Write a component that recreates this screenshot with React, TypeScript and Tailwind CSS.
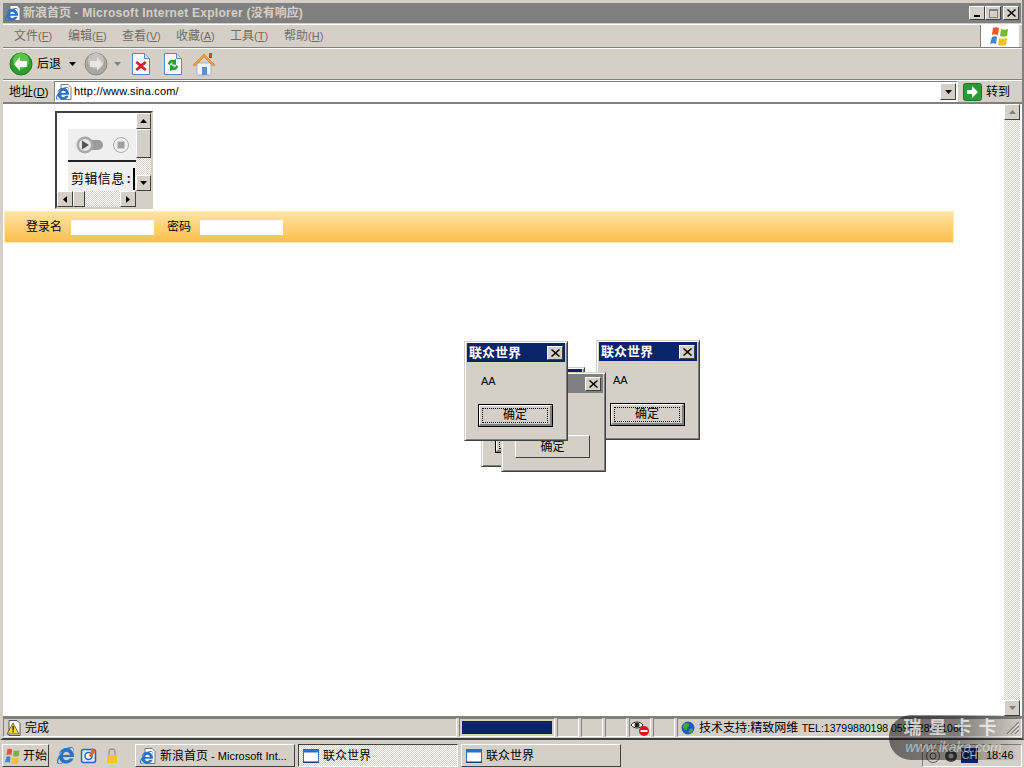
import React from 'react';
import { FaInternetExplorer } from 'react-icons/fa';

const raised = 'border border-t-white border-l-white border-r-[#404040] border-b-[#404040]';
const sunken = 'border border-t-[#808080] border-l-[#808080] border-r-white border-b-white';
const dither = 'bg-[repeating-conic-gradient(#d4d0c8_0_25%,#ffffff_0_50%)] bg-[length:2px_2px]';

const IeIcon = ({ size = 16 }: { size?: number }) => <FaInternetExplorer size={size} color="#2a72c8" />;

const IePage = ({ size = 16 }: { size?: number }) => (
  <span className="relative block shrink-0" style={{ width: size, height: size }}>
    <svg width={size} height={size} viewBox="0 0 16 16">
      <path d="M5 .5h7l3 3v12H5z" fill="#fff" stroke="#7a7a7a" />
    </svg>
    <span className="absolute bottom-0 left-0">
      <FaInternetExplorer size={size - 3} color="#2a72c8" />
    </span>
  </span>
);

const WinFlag = ({ size = 22 }: { size?: number }) => (
  <svg width={size} height={size} viewBox="0 0 22 22">
    <path d="M4 3c2-1 4-1 6 0l-1 7c-2-1-4-1-6 0z" fill="#e8562a" />
    <path d="M12 4c2 1 4 1 7 0l-1 7c-3 1-5 1-7 0z" fill="#7ab52e" />
    <path d="M3 12c2-1 4-1 5 0l-1 7c-2-1-4-1-6 0z" fill="#3f86d8" />
    <path d="M10 13c2 1 5 1 8 0l-1 7c-3 1-6 1-8 0z" fill="#f5bd26" />
  </svg>
);

const RoundArrow = ({ dir, gray }: { dir: 'left' | 'right'; gray?: boolean }) => (
  <svg width="24" height="24" viewBox="0 0 24 24" className="block">
    <circle cx="12" cy="12" r="11" fill={gray ? '#a8a6a0' : '#2e9e2a'} stroke={gray ? '#8e8c86' : '#1c7a1c'} />
    <circle cx="12" cy="9" r="8" fill={gray ? '#c4c2bc' : '#5cc24a'} />
    {dir === 'left' ? (
      <path d="M11 5l-6 7 6 7v-4h7V9h-7z" fill="#fff" />
    ) : (
      <path d="M13 5l6 7-6 7v-4H6V9h7z" fill="#e8e6e0" />
    )}
  </svg>
);

const Caret = ({ color = '#000' }: { color?: string }) => (
  <svg width="7" height="4" viewBox="0 0 7 4" className="block"><path d="M0 0h7L3.500 4z" fill={color} /></svg>
);

const StopIcon = () => (
  <svg width="20" height="24" viewBox="0 0 20 24" className="block">
    <path d="M1.500 1.500h12l5 5v16h-17z" fill="#f4f7fd" stroke="#5f86c4" />
    <path d="M13.500 1.500v5h5" fill="#cfdcf2" stroke="#5f86c4" />
    <path d="M6 9l4 3 4-3 1.500 2-3.500 3 3.500 3-1.500 2-4-3-4 3-1.500-2 3.500-3-3.500-3z" fill="#d8202a" />
  </svg>
);

const RefreshIcon = () => (
  <svg width="20" height="24" viewBox="0 0 20 24" className="block">
    <path d="M1.500 1.500h12l5 5v16h-17z" fill="#f4f7fd" stroke="#5f86c4" />
    <path d="M13.500 1.500v5h5" fill="#cfdcf2" stroke="#5f86c4" />
    <path d="M5 12c0-3 3-5 6-4l2-1v6l-5-1 2-1c-1-1-3 0-3 2z" fill="#27a32d" />
    <path d="M15 14c0 3-3 5-6 4l-2 1v-6l5 1-2 1c1 1 3 0 3-2z" fill="#27a32d" />
  </svg>
);

const HomeIcon = () => (
  <svg width="24" height="24" viewBox="0 0 24 24" className="block">
    <path d="M5 11h14v12H5z" fill="#eef2fa" stroke="#9fb3d2" />
    <path d="M1 13L12 2l11 11-2 1-9-9-9 9z" fill="#f0a03c" stroke="#d07a20" strokeWidth="0.6" />
    <rect x="17" y="1" width="3" height="5" fill="#c8442c" />
    <rect x="10" y="15" width="5" height="8" fill="#5b8fd0" />
  </svg>
);

const GlobeIcon = () => (
  <svg width="14" height="14" viewBox="0 0 14 14" className="shrink-0">
    <circle cx="7" cy="7" r="6.500" fill="#2458b8" />
    <path d="M3 3c2-2 5-1 5 1S6 6 6 8 4 9 3 8 1 5 3 3zM9 8c2-1 4 0 3 2s-3 3-4 2 0-3 1-4z" fill="#3aa83a" />
  </svg>
);

const WindowIcon = () => (
  <svg width="16" height="14" viewBox="0 0 16 14" className="shrink-0">
    <rect x="0.500" y="0.500" width="15" height="13" fill="#fff" stroke="#3a6ea5" />
    <rect x="1" y="1" width="14" height="2.500" fill="#2f6fc0" />
    <rect x="0" y="12.500" width="16" height="1.500" fill="#1d3f78" />
  </svg>
);

const WarnIcon = () => (
  <svg width="16" height="16" viewBox="0 0 16 16" className="shrink-0">
    <path d="M3 .5h8l3 3v12H3z" fill="#fff" stroke="#555" />
    <path d="M7 3l6 11H1z" fill="#fcd92e" stroke="#444" strokeWidth="0.800" />
    <rect x="6.500" y="6" width="1.200" height="4.500" fill="#000" />
    <rect x="6.500" y="11.200" width="1.200" height="1.300" fill="#000" />
  </svg>
);

const PrivacyIcon = () => (
  <svg width="20" height="18" viewBox="0 0 20 18">
    <path d="M1 6c3-4 9-4 12 0-3 4-9 4-12 0z" fill="#fff" stroke="#222" />
    <circle cx="7" cy="6" r="2.500" fill="#222" />
    <circle cx="14" cy="12" r="5" fill="#d8141c" />
    <rect x="10.500" y="11" width="7" height="2" fill="#fff" />
  </svg>
);

const LockIcon = () => (
  <svg width="12" height="16" viewBox="0 0 12 16" className="block">
    <path d="M3 7V4a3 3 0 016 0v3" fill="none" stroke="#9a9a8a" strokeWidth="1.500" />
    <rect x="1" y="7" width="10" height="8" rx="1" fill="#f3c526" />
  </svg>
);

const OutlookIcon = () => (
  <svg width="18" height="18" viewBox="0 0 18 18" className="block">
    <rect x="1.500" y="2.500" width="14" height="13" rx="2" fill="#dbe8fa" stroke="#2a62b8" strokeWidth="1.500" />
    <circle cx="8.500" cy="9" r="3.500" fill="#fff" stroke="#2a62b8" strokeWidth="1.500" />
    <path d="M12 1l4 3-5 6-2-1z" fill="#e0662a" />
  </svg>
);

const ScrollBtn = ({ dir, className = '', dim }: { dir: 'up' | 'down' | 'left' | 'right'; className?: string; dim?: boolean }) => {
  const path = { up: 'M0 4L3.500 0 7 4z', down: 'M0 0h7L3.500 4z', left: 'M4 0v7L0 3.500z', right: 'M0 0v7l4-3.500z' }[dir];
  const horizontal = dir === 'left' || dir === 'right';
  return (
    <div className={`flex shrink-0 items-center justify-center bg-[#d4d0c8] ${raised} ${className}`}>
      <svg width={horizontal ? 4 : 7} height={horizontal ? 7 : 4} viewBox={horizontal ? '0 0 4 7' : '0 0 7 4'}>
        <path d={path} fill={dim ? '#808080' : '#000'} />
      </svg>
    </div>
  );
};

const CloseBox = ({ className = '' }: { className?: string }) => (
  <div className={`flex items-center justify-center bg-[#d4d0c8] ${raised} ${className}`}>
    <svg width="9" height="8" viewBox="0 0 9 8"><path d="M1 0l3.500 3L8 0l1 1-3.500 3L9 7 8 8 4.500 5 1 8 0 7l3.500-3L0 1z" fill="#000" /></svg>
  </div>
);

const Dialog = ({ className, active = true, covered }: { className: string; active?: boolean; covered?: boolean }) => (
  <div
    className={`absolute flex flex-col border border-t-[#d4d0c8] border-l-[#d4d0c8] border-r-[#404040] border-b-[#404040] bg-[#d4d0c8] px-[2px] pt-[1px] shadow-[inset_1px_1px_0_#ffffff,inset_-1px_-1px_0_#808080] ${className}`}
  >
    <div className={`flex h-[19px] shrink-0 items-center justify-between pl-[2px] pr-[2px] ${active ? 'bg-[#0a246a]' : 'bg-[#808080]'}`}>
      <span className="text-[13px] font-bold leading-none text-white">{active && !covered ? '联众世界' : ''}</span>
      <CloseBox className="h-[14px] w-[16px]" />
    </div>
    {active ? (
      <>
        <div className="mt-[13px] h-[13px] pl-[14px] text-[11px] leading-[13px] text-black">{covered ? '' : 'AA'}</div>
        <div className="ml-[11px] mt-[16px] h-[23px] w-[75px] border border-black">
          <div className={`flex h-full items-center justify-center border-r-2 border-b-2 bg-[#d4d0c8] text-[12px] text-black ${raised} border-r-[#808080] border-b-[#808080]`}>
            <span className="flex h-[15px] w-[66px] items-center justify-center border border-dotted border-black">{covered ? '' : '确定'}</span>
          </div>
        </div>
      </>
    ) : (
      <div className={`ml-[11px] mt-[42px] flex h-[23px] w-[75px] items-center justify-center bg-[#d4d0c8] text-[12px] text-black ${raised}`}>确定</div>
    )}
  </div>
);

const TaskButton = ({ icon, label, pressed }: { icon: React.ReactNode; label: React.ReactNode; pressed?: boolean }) => (
  <div
    className={`flex h-[23px] w-[160px] shrink-0 items-center gap-[4px] pl-[4px] text-[12px] text-black ${
      pressed ? `border border-t-[#404040] border-l-[#404040] border-r-white border-b-white ${dither}` : `bg-[#d4d0c8] ${raised}`
    }`}
  >
    {icon}
    <span className="whitespace-nowrap">{label}</span>
  </div>
);

const menuItems = [
  ['文件', 'F'],
  ['编辑', 'E'],
  ['查看', 'V'],
  ['收藏', 'A'],
  ['工具', 'T'],
  ['帮助', 'H'],
];

export default function App() {
  return (
    <div className="relative flex h-[768px] w-[1024px] flex-col overflow-hidden bg-[#d4d0c8] font-['Liberation_Sans','Noto_Sans_CJK_SC',sans-serif]">
      {/* ie window */}
      <div className="flex h-[740px] shrink-0 flex-col border-b-2 border-b-[#404040] border-r-2 border-r-[#808080] border-l-[3px] border-l-[#d4d0c8] pb-[1px] pt-[3px]">
        <div className="mr-[1px] flex h-[20px] shrink-0 items-center justify-between bg-[#808080] pl-[2px] pr-[2px]">
          <div className="flex items-center gap-[2px]">
            <IePage size={16} />
            <span className="text-[12px] font-bold leading-none text-[#d4d0c8]">
              新浪首页 <span className="tracking-[0.27px]">- Microsoft Internet Explorer (</span>没有响应)
            </span>
          </div>
          <div className="flex items-center">
            <div className={`flex h-[14px] w-[16px] items-end justify-center bg-[#d4d0c8] pb-[2px] ${raised}`}>
              <div className="h-[2px] w-[6px] bg-black" />
            </div>
            <div className={`flex h-[14px] w-[16px] items-center justify-center bg-[#d4d0c8] ${raised}`}>
              <div className="h-[9px] w-[9px] border border-t-2 border-[#808080]" />
            </div>
            <CloseBox className="ml-[2px] h-[14px] w-[16px]" />
          </div>
        </div>

        <div className="mt-[1px] flex h-[24px] shrink-0 items-stretch justify-between border-y border-t-white border-b-[#808080]">
          <div className="flex items-center pl-[11px] text-[12px] text-[#6f6d68]">
            {menuItems.map(([name, key]) => (
              <span key={key} className="w-[54px] whitespace-nowrap">
                {name}
                <span className="text-[11px]">
                  (<span className="underline">{key}</span>)
                </span>
              </span>
            ))}
          </div>
          <div className="mr-[3px] flex w-[39px] items-center justify-center border-l border-l-[#808080] bg-white">
            <WinFlag />
          </div>
        </div>

        <div className="flex h-[32px] shrink-0 items-center border-t border-t-white border-b border-b-[#808080] pl-[6px]">
          <RoundArrow dir="left" />
          <span className="ml-[4px] text-[12px] text-black">后退</span>
          <span className="ml-[8px]"><Caret /></span>
          <span className="ml-[8px]"><RoundArrow dir="right" gray /></span>
          <span className="ml-[6px]"><Caret color="#808080" /></span>
          <span className="ml-[10px]"><StopIcon /></span>
          <span className="ml-[12px]"><RefreshIcon /></span>
          <span className="ml-[9px]"><HomeIcon /></span>
        </div>

        <div className="flex h-[24px] shrink-0 items-center border-t border-t-white border-b-2 border-b-[#808080] pl-[6px]">
          <span className="w-[45px] whitespace-nowrap text-[12px] text-black">
            地址<span className="text-[11px]">(<span className="underline">D</span>)</span>
          </span>
          <div className={`flex h-[21px] w-[904px] items-center gap-[2px] bg-white pl-[1px] pr-[1px] ${sunken} border-t-[#404040] border-l-[#404040]`}>
            <IePage />
            <span className="flex-1 text-[11px] tracking-[0.2px] text-black">http://www.sina.com/</span>
            <ScrollBtn dir="down" className="h-[17px] w-[16px]" />
          </div>
          <div className="ml-[5px] flex items-center gap-[4px]">
            <svg width="19" height="18" viewBox="0 0 19 18">
              <rect x="0.500" y="0.500" width="18" height="17" rx="2" fill="#2b9a34" stroke="#1e7426" />
              <path d="M9 3l6 6-6 6v-4H4V7h5z" fill="#fff" />
            </svg>
            <span className="text-[12px] text-black">转到</span>
          </div>
        </div>

        <div className="flex min-h-0 flex-1 bg-white">
          <div className="flex-1 pl-[1px] pt-[7px]">
            {/* embedded media player frame */}
            <div className="ml-[51px] flex h-[98px] w-[98px] flex-col border-2 border-t-[#404040] border-l-[#404040] border-r-[#d4d0c8] border-b-[#d4d0c8] bg-white">
              <div className="flex min-h-0 flex-1">
                <div className="flex-1 overflow-hidden pl-[11px] pt-[16px]">
                  <div className="h-[66px] w-[81px] bg-[#efefef]">
                    <div className="flex h-[33px] items-center gap-[10px] border-b-2 border-b-[#222] pl-[8px]">
                      <svg width="27" height="18" viewBox="0 0 27 18" className="shrink-0">
                        <path d="M14 4h8a5 5 0 010 10h-8z" fill="#9b9b9b" />
                        <circle cx="9" cy="9" r="8.500" fill="#a8a8a8" />
                        <circle cx="9" cy="9" r="6" fill="#e6e6e6" />
                        <path d="M6 4.500l7 4.500-7 4.500z" fill="#555" />
                      </svg>
                      <svg width="16" height="16" viewBox="0 0 16 16" className="shrink-0">
                        <circle cx="8" cy="8" r="7.500" fill="#f0f0f0" stroke="#aaa" />
                        <rect x="4.500" y="4.500" width="7" height="7" fill="#a0a0a0" />
                      </svg>
                    </div>
                    <div className="mt-[2px] flex h-[29px] items-center pl-[3px] text-[13px] leading-none whitespace-nowrap text-black">
                      <span className="tracking-[0.4px]">剪辑信息</span>
                      <span className="ml-[2px] font-bold">:</span>
                      <span className="ml-[2px] h-[22px] w-[2px] bg-black" />
                    </div>
                  </div>
                </div>
                <div className="flex w-[15px] shrink-0 flex-col">
                  <ScrollBtn dir="up" className="h-[16px]" />
                  <div className={`flex-1 ${dither}`}>
                    <div className={`h-[29px] bg-[#d4d0c8] ${raised}`} />
                  </div>
                  <ScrollBtn dir="down" className="h-[16px]" />
                </div>
              </div>
              <div className="flex h-[16px] shrink-0">
                <ScrollBtn dir="left" className="w-[16px]" />
                <div className={`flex-1 ${dither}`}>
                  <div className={`h-full w-[12px] bg-[#d4d0c8] ${raised}`} />
                </div>
                <ScrollBtn dir="right" className="w-[16px]" />
                <div className="w-[15px] bg-[#d4d0c8]" />
              </div>
            </div>

            {/* login strip */}
            <div className="mt-[2px] flex h-[32px] w-[950px] items-center border border-[#ffedb8] bg-gradient-to-b from-[#ffe3a0] to-[#fcbf48] pl-[21px] text-[12px] text-black">
              <span>登录名</span>
              <div className="ml-[9px] h-[15px] w-[83px] bg-white" />
              <span className="ml-[13px]">密码</span>
              <div className="ml-[9px] h-[15px] w-[83px] bg-white" />
            </div>
          </div>

          <div className="mr-[2px] flex w-[16px] shrink-0 flex-col">
            <ScrollBtn dir="up" dim className="h-[16px]" />
            <div className={`flex-1 ${dither}`} />
            <ScrollBtn dir="down" dim className="h-[16px]" />
          </div>
        </div>

        <div className="flex h-[21px] shrink-0 items-center border-t-2 border-t-[#808080] text-[12px] text-black">
          <div className={`flex h-full w-[454px] items-center gap-[3px] pl-[2px] ${sunken}`}>
            <WarnIcon />
            <span>完成</span>
          </div>
          <div className={`ml-[2px] flex h-full w-[96px] items-center px-[2px] ${sunken}`}>
            <div className="h-[13px] w-full bg-[#0a246a]" />
          </div>
          <div className={`ml-[2px] h-full w-[22px] ${sunken}`} />
          <div className={`ml-[2px] h-full w-[22px] ${sunken}`} />
          <div className={`ml-[2px] h-full w-[22px] ${sunken}`} />
          <div className={`ml-[2px] flex h-full w-[22px] items-center justify-center ${sunken}`}>
            <PrivacyIcon />
          </div>
          <div className={`ml-[2px] h-full w-[22px] ${sunken}`} />
          <div className={`ml-[2px] flex h-full flex-1 items-center gap-[4px] overflow-hidden whitespace-nowrap pl-[3px] ${sunken}`}>
            <GlobeIcon />
            <span>
              技术支持:精致网维 <span className="text-[10.5px]">TEL:13799880198 0595-28981068</span>
            </span>
            <svg width="13" height="13" viewBox="0 0 13 13" className="ml-auto mr-[2px] shrink-0">
              <path d="M13 1L1 13M13 5L5 13M13 9L9 13" stroke="#808080" strokeWidth="1.400" />
              <path d="M13 2.500L2.500 13M13 6.500L6.500 13M13 10.500L10.500 13" stroke="#fff" />
            </svg>
          </div>
        </div>
      </div>

      {/* taskbar */}
      <div className="flex h-[28px] flex-1 items-center border-t-2 border-t-[#d4d0c8] pl-[2px] pt-[1px]">
        <div className={`flex h-[23px] w-[47px] items-center gap-[1px] bg-[#d4d0c8] pl-[1px] text-[12px] text-black ${raised}`}>
          <WinFlag size={18} />
          <span>开始</span>
        </div>
        <div className="ml-[8px] flex items-center gap-[6px]">
          <IeIcon size={17} />
          <OutlookIcon />
          <span className="ml-[2px]"><LockIcon /></span>
        </div>
        <div className="ml-[17px] flex items-center gap-[3px]">
          <TaskButton
            icon={<IePage />}
            label={
              <>
                新浪首页<span className="text-[11px]"> - Microsoft Int...</span>
              </>
            }
          />
          <TaskButton icon={<WindowIcon />} label="联众世界" pressed />
          <TaskButton icon={<WindowIcon />} label="联众世界" />
        </div>
        <div className={`ml-auto mr-[2px] flex h-[23px] w-[100px] items-center gap-[2px] pl-[2px] text-[12px] ${sunken}`}>
          <svg width="16" height="16" viewBox="0 0 16 16"><circle cx="8" cy="8" r="6.500" fill="none" stroke="#555" /><circle cx="8" cy="8" r="3" fill="none" stroke="#555" /></svg>
          <svg width="16" height="16" viewBox="0 0 16 16"><circle cx="8" cy="8" r="6" fill="#444" /><circle cx="8" cy="8" r="2.500" fill="#bbb" /></svg>
          <span className="flex h-[15px] w-[17px] items-center justify-center bg-[#0a246a] text-[11px] text-white">CH</span>
          <span className="ml-[6px] text-[11px] text-black">18:46</span>
        </div>
      </div>

      {/* stacked dialogs */}
      <Dialog className="left-[481px] top-[367px] h-[100px] w-[104px]" covered />
      <Dialog className="left-[596px] top-[340px] h-[100px] w-[104px]" />
      <Dialog className="left-[501px] top-[372px] h-[100px] w-[105px]" active={false} />
      <Dialog className="left-[464px] top-[341px] h-[100px] w-[104px]" />

      {/* watermark */}
      <div className="absolute left-[889px] top-[715px] flex h-[45px] w-[135px] flex-col items-center overflow-hidden whitespace-nowrap rounded-l-[22px] bg-gradient-to-r from-black/50 via-black/40 to-black/0 pr-[6px] pt-[2px]">
        <span className="text-[18px] font-bold leading-[22px] tracking-[7px] text-white/70">瑞星卡卡</span>
        <span className="text-[14px] italic leading-[16px] text-white/50">www.ikaka.com</span>
      </div>
    </div>
  );
}
